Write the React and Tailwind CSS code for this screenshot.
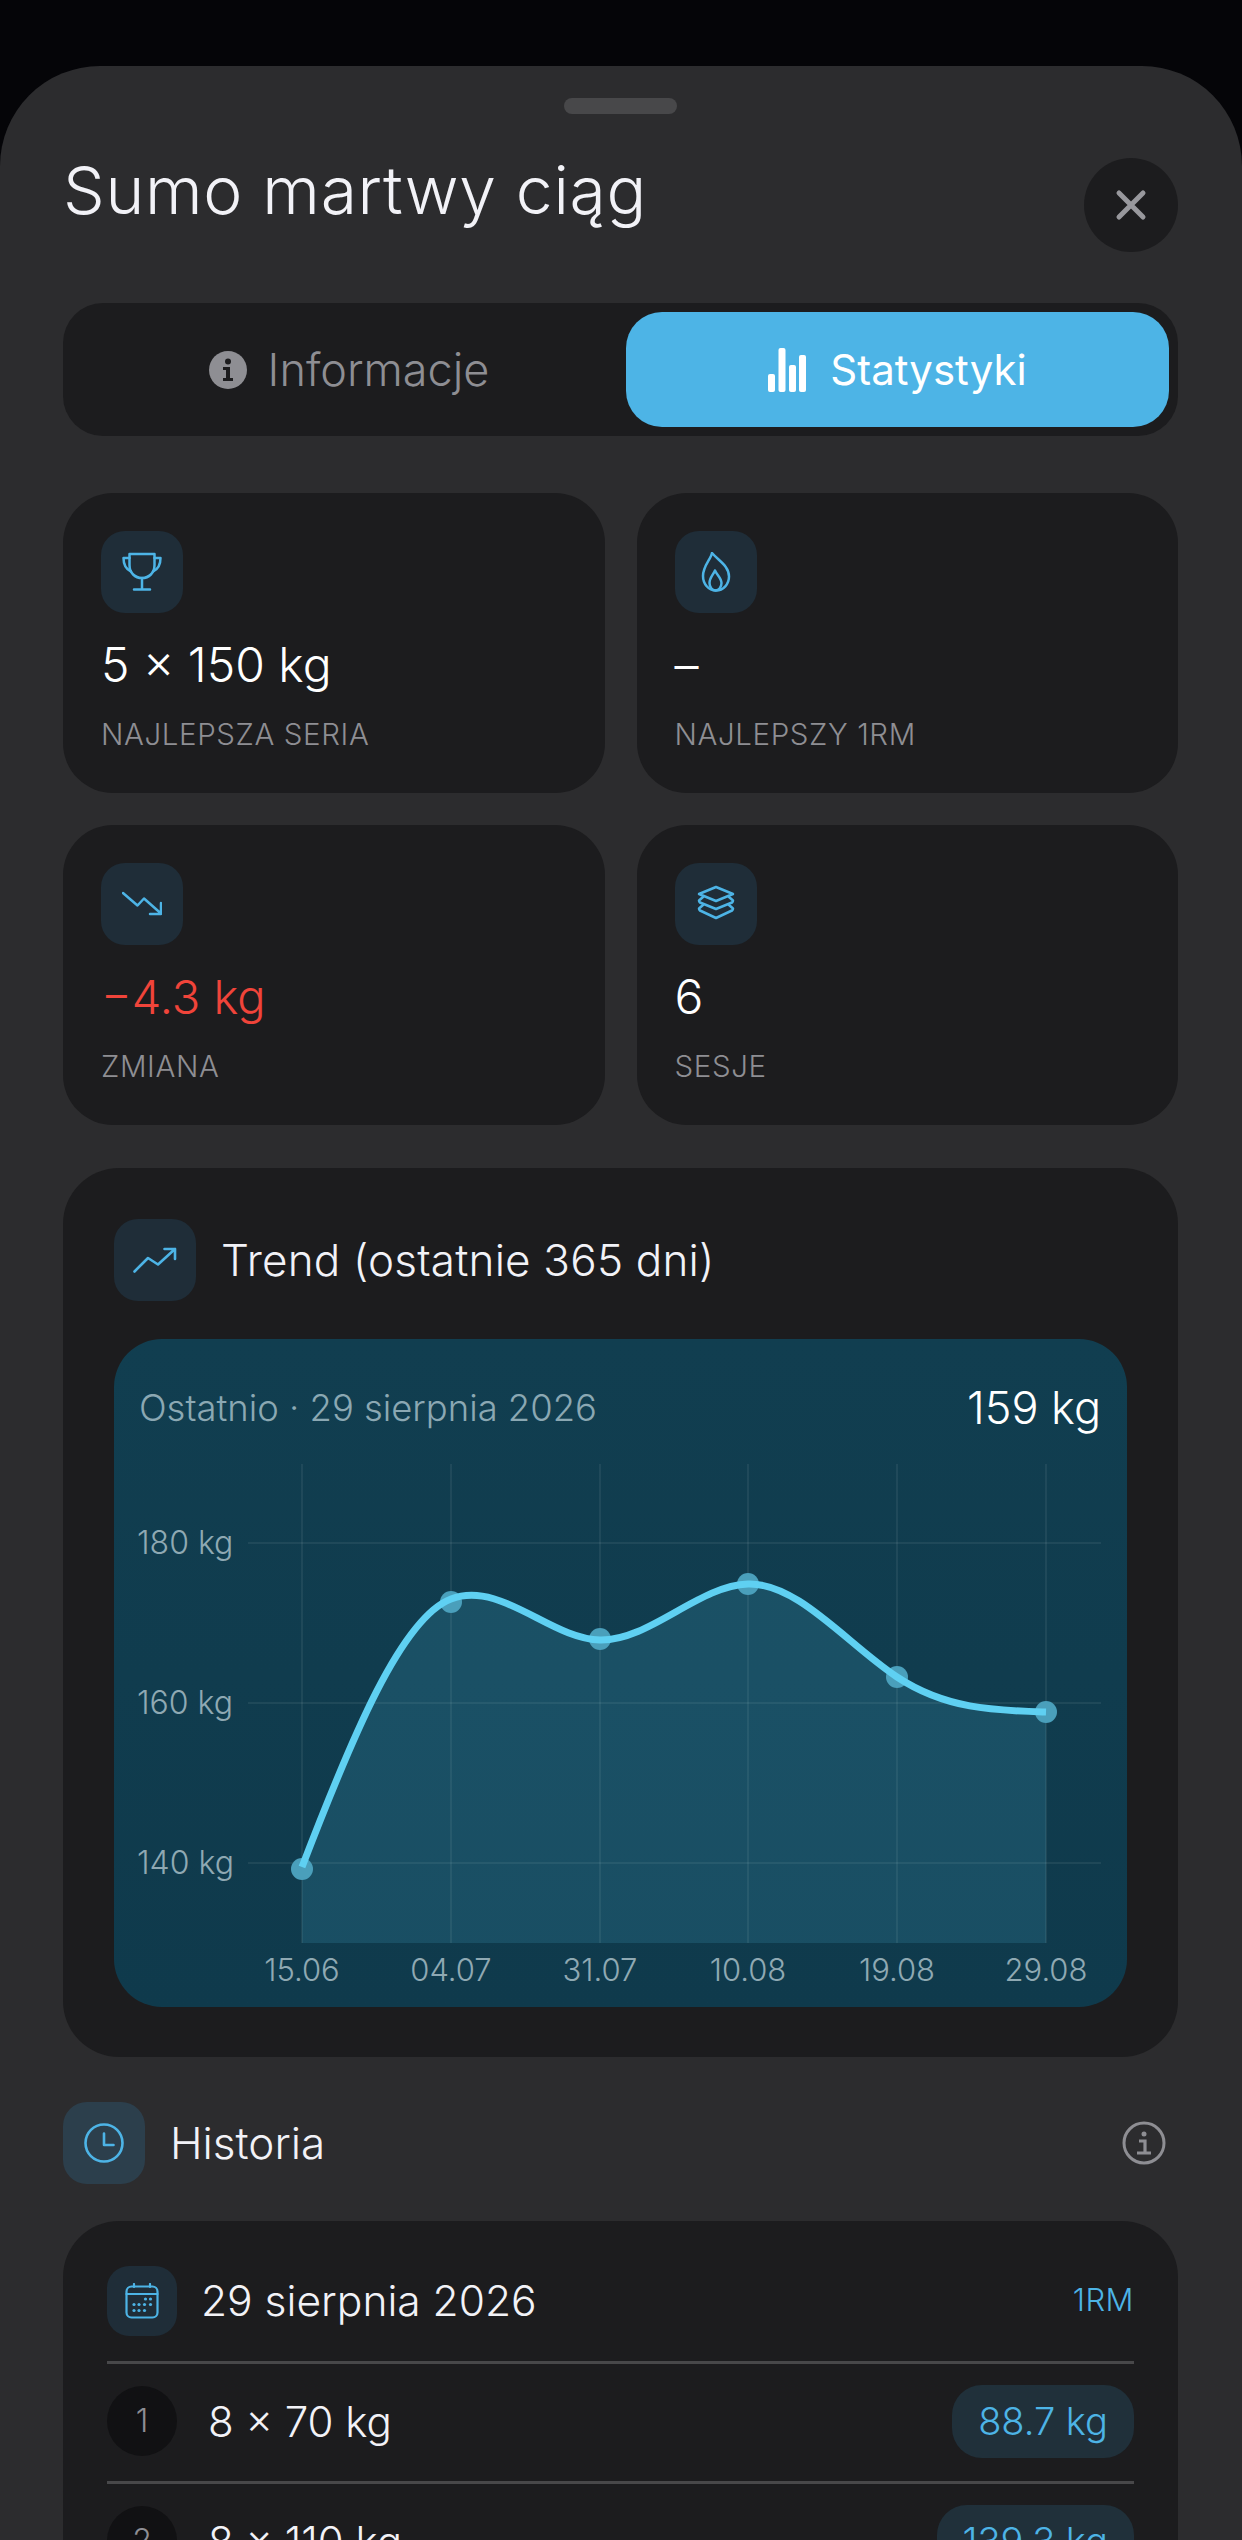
import React from 'react';

const xs = [302, 451, 600, 748, 897, 1046];
const lineYs = [1867, 1599, 1640, 1584, 1677, 1712];
const dotYs = [1869, 1602, 1639, 1584, 1677, 1712];
const slopes = [-2.6, -0.38, 0.02, -0.03, 0.66, 0.03];
const OX = 114;
const OY = 1339;

// hermite segments with slopes read off the reference curve
function linePath() {
  let d = `M${xs[0] - OX} ${lineYs[0] - OY}`;
  for (let i = 0; i < xs.length - 1; i++) {
    const dx = (xs[i + 1] - xs[i]) / 3;
    const x1 = xs[i] - OX;
    const y1 = lineYs[i] - OY;
    const x2 = xs[i + 1] - OX;
    const y2 = lineYs[i + 1] - OY;
    d += ` C${x1 + dx} ${y1 + dx * slopes[i]} ${x2 - dx} ${y2 - dx * slopes[i + 1]} ${x2} ${y2}`;
  }
  return d;
}

function Trend() {
  const line = linePath();
  const bottom = 1943 - OY;
  const area = `${line} L${xs[5] - OX} ${bottom} L${xs[0] - OX} ${bottom} Z`;
  return (
    <svg width="1012" height="668" viewBox="0 0 1012 668" className="absolute inset-0">
      {xs.map((x) => (
        <line key={x} x1={x - OX} x2={x - OX} y1={125} y2={604} stroke="#ffffff" strokeOpacity="0.09" strokeWidth="1.5" />
      ))}
      {[204, 364, 524].map((y) => (
        <line key={y} x1={134} x2={987} y1={y} y2={y} stroke="#ffffff" strokeOpacity="0.09" strokeWidth="1.5" />
      ))}
      <path d={area} fill="#5fd0f2" fillOpacity="0.14" />
      {xs.map((x, i) => (
        <circle key={x} cx={x - OX} cy={dotYs[i] - OY} r="11" fill="#4a9fbb" />
      ))}
      <path d={line} fill="none" stroke="#5fd0f2" strokeWidth="7" />
    </svg>
  );
}

const blue = '#4db4e6';

function IconBox({ children, big, light }) {
  return (
    <div className={`flex items-center justify-center shrink-0 ${big ? 'w-[82px] h-[82px] rounded-[24px]' : 'w-[70px] h-[70px] rounded-[22px]'} ${light ? 'bg-[#2c3f4c]' : 'bg-[#1f2d38]'}`}>
      {children}
    </div>
  );
}

const Trophy = () => (
  <svg width="40" height="40" viewBox="0 0 40 40" fill="none" stroke={blue} strokeWidth="2.5" strokeLinecap="round" strokeLinejoin="round">
    <path d="M7.5 2H32.5V13C32.5 21 27 26 20 26C13 26 7.5 21 7.5 13Z" />
    <path d="M7.5 6H1.5C1.5 13 3.5 17 9 19.5M32.5 6H38.5C38.5 13 36.5 17 31 19.5M20 26V37M12 37.5H28" />
  </svg>
);
const Flame = () => (
  <svg width="40" height="40" viewBox="0 0 40 40" fill="none" stroke={blue} strokeWidth="2.5" strokeLinecap="round" strokeLinejoin="round">
    <path d="M16 1C15 7 7 14 7 24C7 32 12.5 38.5 20 38.5C27.5 38.5 33 32 33 24.5C33 14 23 9 16 1Z" />
    <path d="M19 18.5C17 23 13.5 26 13.5 31C13.5 35 16 38.5 19.5 38.5C23 38.5 25.5 35 25.5 31C25.5 26 21 23 19 18.5Z" />
  </svg>
);
const TrendDown = () => (
  <svg width="40" height="40" viewBox="0 0 40 40" fill="none" stroke={blue} strokeWidth="2.5" strokeLinecap="round" strokeLinejoin="round">
    <path d="M1 9L15.5 21.5L22 14.5L39 29.5M39 19V30H28" />
  </svg>
);
const Layers = () => (
  <svg width="40" height="40" viewBox="0 0 40 40" fill="none" stroke={blue} strokeWidth="2.5" strokeLinecap="round" strokeLinejoin="round">
    <path d="M20 3L37 10L20 17L3 10Z" />
    <path d="M7 13L3 16.5C3 18 3.5 18 4 18.5L20 25L36 18.5C36.5 18 37 18 37 16.5L33 13" />
    <path d="M7 21L3 24.5C3 26 3.5 26 4 26.5L20 34L36 26.5C36.5 26 37 26 37 24.5L33 21" />
  </svg>
);
const TrendUp = () => (
  <svg width="44" height="44" viewBox="0 0 44 44" fill="none" stroke={blue} strokeWidth="2.6" strokeLinecap="round" strokeLinejoin="round">
    <path d="M1.5 33.5L15 20L25 26.5L42 11M31.5 11H42V21" />
  </svg>
);
const Clock = () => (
  <svg width="40" height="40" viewBox="0 0 40 40" fill="none" stroke={blue} strokeWidth="2.6" strokeLinecap="round" strokeLinejoin="round">
    <circle cx="20" cy="20" r="18.5" />
    <path d="M20 10.5V22H29.5" />
  </svg>
);
const Calendar = () => (
  <svg width="36" height="36" viewBox="0 0 36 36" fill="none" stroke={blue} strokeWidth="2.2" strokeLinecap="round" strokeLinejoin="round">
    <rect x="2.5" y="3.5" width="31" height="31" rx="5" />
    <path d="M2.5 11H33.5M10 1V4M26 1V4" />
    <g fill={blue} stroke="none">
      {[[21.5, 16], [26.5, 16], [10, 21.5], [15, 21.5], [20.5, 21.5], [26.5, 21.5], [10, 27.5], [15, 27.5], [20.5, 27.5]].map(([x, y]) => (
        <circle key={`${x}-${y}`} cx={x} cy={y} r="1.6" />
      ))}
    </g>
  </svg>
);

function Stat({ icon, value, label, red }) {
  return (
    <div className="h-[300px] rounded-[50px] bg-[#1c1c1e] pt-[38px] pl-[38px]">
      <IconBox big>{icon}</IconBox>
      <div className={`mt-[21px] h-[62px] leading-[62px] ${red ? 'text-[47px] text-[#f0443a]' : 'text-[48px] text-white'}`}>{value}</div>
      <div className="mt-[18px] text-[29.5px] leading-[40px] tracking-[0.6px] text-[#8e8e93]">{label}</div>
    </div>
  );
}

function SetRow({ n, text, rm }) {
  return (
    <div className="flex items-center h-[120px] pb-[3px] border-t-[3px] border-[#48484a]">
      <div className="w-[70px] h-[70px] rounded-full bg-[#111113] flex items-center justify-center text-[32px] text-[#8e8e93]">{n}</div>
      <div className="ml-[31px] text-[42px] text-[#f2f2f7]">{text}</div>
      <div className="ml-auto h-[73px] px-[26px] rounded-[30px] bg-[#20303a] flex items-center text-[38px] text-[#4db4e6]">{rm}</div>
    </div>
  );
}

export default function App() {
  return (
    <div className="h-[2540px] w-[1242px] overflow-hidden bg-[#050508] pt-[66px] font-['Inter','Noto_Sans',sans-serif] font-light">
      <div className="h-[2474px] rounded-t-[100px] bg-[#2c2c2e] pl-[63px] pr-[64px] pt-[32px]">
        <div className="mx-auto h-[16px] w-[113px] rounded-full bg-[#48484a]" />

        <div className="mt-[44px] flex items-start justify-between">
          <h1 className="mt-[-8px] text-[66px] leading-[80px] tracking-[0.7px] text-[#f2f2f7]">Sumo martwy ciąg</h1>
          <div className="w-[94px] h-[94px] rounded-full bg-[#1c1c1e] flex items-center justify-center">
            <svg width="32" height="32" viewBox="0 0 32 32" stroke="#98989d" strokeWidth="5" strokeLinecap="round">
              <path d="M4 4l24 24M28 4L4 28" />
            </svg>
          </div>
        </div>

        <div className="mt-[51px] h-[133px] rounded-[40px] bg-[#1c1c1e] p-[9px] flex">
          <div className="flex-1 flex items-center justify-center gap-[21px] text-[45px] text-[#8e8e93]">
            <svg width="38" height="38" viewBox="0 0 38 38">
              <circle cx="19" cy="19" r="19" fill="#8e8e93" />
              <circle cx="19" cy="10.5" r="3" fill="#1c1c1e" />
              <path d="M14 16h7v11h3v3H14v-3h3v-8h-3z" fill="#1c1c1e" />
            </svg>
            Informacje
          </div>
          <div className="w-[543px] rounded-[36px] bg-[#4db4e6] flex items-center justify-center gap-[24px] text-[42px] text-white font-normal">
            <svg width="38" height="44" viewBox="0 0 38 44" fill="#ffffff">
              <rect x="0" y="26" width="7" height="18" rx="2" />
              <rect x="10.5" y="0" width="7" height="44" rx="2" />
              <rect x="21" y="17" width="7" height="27" rx="2" />
              <rect x="31" y="7" width="7" height="37" rx="2" />
            </svg>
            Statystyki
          </div>
        </div>

        <div className="mt-[57px] grid grid-cols-2 gap-x-[32px] gap-y-[32px]">
          <Stat icon={<Trophy />} value="5 × 150 kg" label="NAJLEPSZA SERIA" />
          <Stat icon={<Flame />} value="–" label="NAJLEPSZY 1RM" />
          <Stat icon={<TrendDown />} value="−4.3 kg" label="ZMIANA" red />
          <Stat icon={<Layers />} value="6" label="SESJE" />
        </div>

        <div className="mt-[43px] h-[889px] rounded-[56px] bg-[#1c1c1e] px-[51px] pt-[51px]">
          <div className="flex items-center gap-[25px]">
            <IconBox big><TrendUp /></IconBox>
            <div className="text-[44px] tracking-[0.2px] text-[#f2f2f7]">Trend (ostatnie 365 dni)</div>
          </div>

          <div className="relative mt-[38px] h-[668px] rounded-[48px] bg-linear-to-b from-[#113e50] to-[#0f3a4c] overflow-hidden">
            <Trend />
            <div className="absolute left-[25px] right-[26px] top-[40px] flex items-center justify-between h-[58px]">
              <span className="text-[36.4px] text-[#8ba8b3]">Ostatnio · 29 sierpnia 2026</span>
              <span className="text-[45px] text-white">159 kg</span>
            </div>
            {[['180 kg', 204], ['160 kg', 364], ['140 kg', 524]].map(([t, y]) => (
              <span key={t} className="absolute left-[23px] text-[32px] leading-[40px] text-[#8fa9b3]" style={{ top: y - 20 }}>{t}</span>
            ))}
            {['15.06', '04.07', '31.07', '10.08', '19.08', '29.08'].map((t, i) => (
              <span key={t} className="absolute w-[120px] text-center top-[611px] text-[31px] leading-[40px] text-[#8fa9b3]" style={{ left: xs[i] - OX - 60 }}>{t}</span>
            ))}
          </div>
        </div>

        <div className="mt-[45px] flex items-center">
          <IconBox big light><Clock /></IconBox>
          <div className="ml-[25px] text-[44px] text-[#f2f2f7]">Historia</div>
          <svg className="ml-auto mr-[12px]" width="44" height="44" viewBox="0 0 44 44" fill="none" stroke="#8e8e93" strokeWidth="3">
            <circle cx="22" cy="22" r="20" />
            <circle cx="22" cy="13" r="2.5" fill="#8e8e93" stroke="none" />
            <path d="M17 20h6v12M15 32h14" strokeWidth="3.2" />
          </svg>
        </div>

        <div className="mt-[37px] rounded-[56px] bg-[#1c1c1e] px-[44px] pt-[45px]">
          <div className="flex items-center h-[95px] pb-[26px]">
            <IconBox><Calendar /></IconBox>
            <div className="ml-[24px] text-[42.5px] text-[#f2f2f7]">29 sierpnia 2026</div>
            <div className="ml-auto text-[31px] tracking-[0.5px] text-[#4db4e6]">1RM</div>
          </div>
          <SetRow n="1" text="8 × 70 kg" rm="88.7 kg" />
          <SetRow n="2" text="8 × 110 kg" rm="139.3 kg" />
        </div>
      </div>
    </div>
  );
}
